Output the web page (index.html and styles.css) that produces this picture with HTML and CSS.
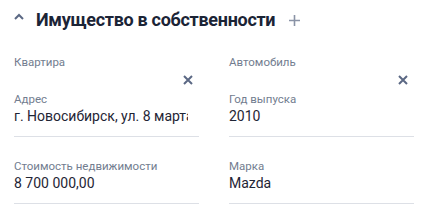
FILE: index.html
```html
<!DOCTYPE html>
<html lang="ru">
<head>
<meta charset="utf-8">
<link rel="stylesheet" href="styles.css">
</head>
<body>
<section class="section">
  <div class="head">
    <svg class="chevron" width="10" height="7" viewBox="0 0 10 7"><path d="M1 6 L5 2 L9 6" fill="none" stroke="#5b6884" stroke-width="2"/></svg>
    <h2 class="title">Имущество в собственности</h2>
    <svg class="plus" width="11" height="11" viewBox="0 0 11 11"><path d="M5.5 0 V11 M0 5.5 H11" fill="none" stroke="#8a93a6" stroke-width="1.6"/></svg>
  </div>
  <div class="groups">
    <div class="group">
      <div class="group-label">Квартира</div>
      <div class="group-actions">
        <svg class="remove" width="10" height="10" viewBox="0 0 10 10"><path d="M1 1 L9 9 M9 1 L1 9" fill="none" stroke="#5b6884" stroke-width="2"/></svg>
      </div>
      <div class="field">
        <div class="label">Адрес</div>
        <div class="value">г. Новосибирск, ул. 8 марта</div>
      </div>
      <div class="field">
        <div class="label">Стоимость недвижимости</div>
        <div class="value">8 700 000,00</div>
      </div>
    </div>
    <div class="group">
      <div class="group-label">Автомобиль</div>
      <div class="group-actions">
        <svg class="remove" width="10" height="10" viewBox="0 0 10 10"><path d="M1 1 L9 9 M9 1 L1 9" fill="none" stroke="#5b6884" stroke-width="2"/></svg>
      </div>
      <div class="field">
        <div class="label">Год выпуска</div>
        <div class="value">2010</div>
      </div>
      <div class="field">
        <div class="label">Марка</div>
        <div class="value">Mazda</div>
      </div>
    </div>
  </div>
</section>
</body>
</html>
```
FILE: styles.css
```css
html, body {
  margin: 0;
  padding: 0;
  background: #ffffff;
}
body {
  font-family: Roboto, "Liberation Sans", sans-serif;
  color: #1f2535;
}
.section {
  padding: 8px 14px 0 14px;
}
.head {
  display: flex;
  align-items: center;
  height: 24px;
}
.chevron {
  display: block;
  align-self: flex-start;
  margin-top: 5px;
  margin-right: 12px;
}
.title {
  margin: 0;
  font-size: 18px;
  line-height: 24px;
  font-weight: 700;
  letter-spacing: -0.3px;
  color: #1b2436;
}
.plus {
  display: block;
  margin-left: 14px;
}
.groups {
  display: grid;
  grid-template-columns: 185px 185px;
  column-gap: 30px;
  margin-top: 24px;
}
.group-label, .label {
  font-size: 11.5px;
  line-height: 13px;
  color: #727d8f;
}
.group-actions {
  display: flex;
  justify-content: flex-end;
  align-items: center;
  height: 22px;
  padding-right: 6px;
}
.remove {
  display: block;
}
.field {
  margin-top: 23px;
  padding-bottom: 11px;
  border-bottom: 1px solid #dde0e6;
}
.group-actions + .field {
  margin-top: 2px;
}
.label {
  margin-bottom: 1px;
}
.value {
  font-size: 14px;
  line-height: 18px;
  white-space: nowrap;
  overflow: hidden;
  margin-right: 11px;
}
```
